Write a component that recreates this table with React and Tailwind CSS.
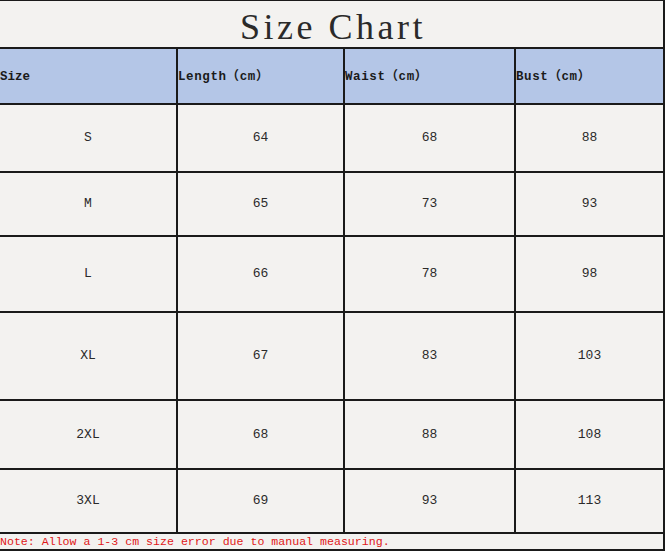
const rows = [
  { size: 'S', length: 64, waist: 68, bust: 88, h: 'h-[68px]' },
  { size: 'M', length: 65, waist: 73, bust: 93, h: 'h-[64px]' },
  { size: 'L', length: 66, waist: 78, bust: 98, h: 'h-[76px]' },
  { size: 'XL', length: 67, waist: 83, bust: 103, h: 'h-[88px]' },
  { size: '2XL', length: 68, waist: 88, bust: 108, h: 'h-[69px]' },
  { size: '3XL', length: 69, waist: 93, bust: 113, h: 'h-[64px]' },
];

const cols = 'grid grid-cols-[176px_167px_171px_149px]';
const mono = "font-['Liberation_Mono','Noto_Sans_CJK_SC',monospace]";

export default function App() {
  return (
    <div className="w-[665px] h-[551px] overflow-hidden bg-[#f3f2f0] text-[#222]">
      <div className="h-[47px] border-t border-r-2 border-[#1a1a1a] flex items-center justify-center pt-[5px]">
        <h1 className="pl-[3px] text-[36px] leading-none tracking-[3.5px] text-[#2a2a2a] font-['Liberation_Serif',serif]">
          Size Chart
        </h1>
      </div>

      <div className={`${cols} h-[56px] border-t-2 border-r-2 border-[#1a1a1a] bg-[#b4c6e7] ${mono} text-[12.5px] font-bold text-[#1a1a1a]`}>
        <div className="flex items-center pt-[2px]">Size</div>
        <div className="flex items-center pt-[2px] border-l-2 border-[#1a1a1a] tracking-[0.6px]">Length（cm）</div>
        <div className="flex items-center pt-[2px] border-l-2 border-[#1a1a1a] tracking-[0.6px]">Waist（cm）</div>
        <div className="flex items-center pt-[2px] border-l-2 border-[#1a1a1a] tracking-[0.6px]">Bust（cm）</div>
      </div>

      {rows.map((r) => (
        <div key={r.size} className={`${cols} ${r.h} border-t-2 border-r-2 border-[#1a1a1a] ${mono} text-[13px] text-[#2a2a2a]`}>
          <div className="flex items-center justify-center">{r.size}</div>
          <div className="flex items-center justify-center border-l-2 border-[#1a1a1a]">{r.length}</div>
          <div className="flex items-center justify-center border-l-2 border-[#1a1a1a]">{r.waist}</div>
          <div className="flex items-center justify-center border-l-2 border-[#1a1a1a]">{r.bust}</div>
        </div>
      ))}

      <div className={`h-[19px] border-t-2 border-b-2 border-r-2 border-[#1a1a1a] flex items-center ${mono} text-[11.6px] text-[#e01818]`}>
        Note: Allow a 1-3 cm size error due to manual measuring.
      </div>
    </div>
  );
}
